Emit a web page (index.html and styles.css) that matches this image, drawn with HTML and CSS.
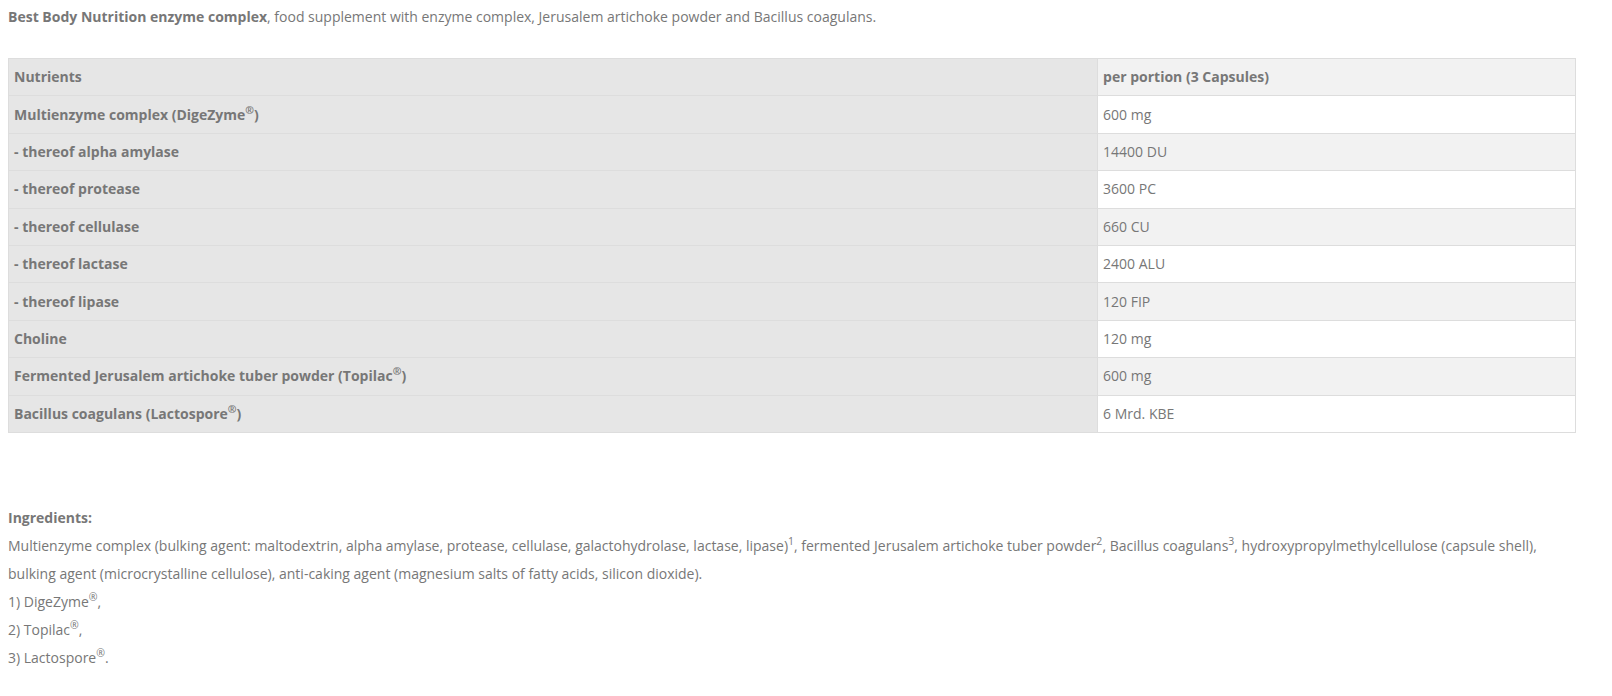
FILE: index.html
```html
<!DOCTYPE html>
<html lang="en">
<head>
    <meta charset="UTF-8">
    <meta name="viewport" content="width=device-width, initial-scale=1.0">
    <link rel="stylesheet" href="styles.css">
    <title>Best Body Nutrition enzyme complex</title>
</head>
<body>
    <div class="content">
        <p class="intro"><strong>Best Body Nutrition enzyme complex</strong>, food supplement with enzyme complex, Jerusalem artichoke powder and Bacillus coagulans.</p>

        <table class="nutrients">
            <tr class="head">
                <td class="name">Nutrients</td>
                <td class="value">per portion (3 Capsules)</td>
            </tr>
            <tr>
                <td class="name">Multienzyme complex (DigeZyme<sup>®</sup>)</td>
                <td class="value">600 mg</td>
            </tr>
            <tr>
                <td class="name">- thereof alpha amylase</td>
                <td class="value">14400 DU</td>
            </tr>
            <tr>
                <td class="name">- thereof protease</td>
                <td class="value">3600 PC</td>
            </tr>
            <tr>
                <td class="name">- thereof cellulase</td>
                <td class="value">660 CU</td>
            </tr>
            <tr>
                <td class="name">- thereof lactase</td>
                <td class="value">2400 ALU</td>
            </tr>
            <tr>
                <td class="name">- thereof lipase</td>
                <td class="value">120 FIP</td>
            </tr>
            <tr>
                <td class="name">Choline</td>
                <td class="value">120 mg</td>
            </tr>
            <tr>
                <td class="name">Fermented Jerusalem artichoke tuber powder (Topilac<sup>®</sup>)</td>
                <td class="value">600 mg</td>
            </tr>
            <tr>
                <td class="name">Bacillus coagulans (Lactospore<sup>®</sup>)</td>
                <td class="value">6 Mrd. KBE</td>
            </tr>
        </table>

        <div class="ingredients">
            <strong>Ingredients:</strong><br>
            Multienzyme complex (bulking agent: maltodextrin, alpha amylase, protease, cellulase, galactohydrolase, lactase, lipase)<sup>1</sup>, fermented Jerusalem artichoke tuber powder<sup>2</sup>, Bacillus coagulans<sup>3</sup>, hydroxypropylmethylcellulose (capsule shell), bulking agent (microcrystalline cellulose), anti-caking agent (magnesium salts of fatty acids, silicon dioxide).<br>
            1) DigeZyme<sup>®</sup>,<br>
            2) Topilac<sup>®</sup>,<br>
            3) Lactospore<sup>®</sup>.
        </div>
    </div>
</body>
</html>
```

FILE: styles.css
```css
*{
    box-sizing: border-box;
}

body{
    margin: 8px;
    font-family: "Open Sans", sans-serif;
    font-size: 14px;
    color: #777;
    background-color: #fff;
}

.content{
    width: calc(100% - 28px);
}

strong{
    font-weight: 700;
}

sup{
    font-size: 0.75em;
    line-height: 0;
}

.intro{
    margin: 0;
    line-height: 18px;
}

.nutrients{
    width: 100%;
    margin-top: 32px;
    border-collapse: collapse;
    border: 1px solid #ddd;
}

.nutrients td{
    border-top: 1px solid #ddd;
    padding: 0 5px;
    height: 37.4px;
    line-height: 20px;
    vertical-align: middle;
}

.nutrients .name{
    width: 69.5%;
    font-weight: 700;
    background-color: #e6e6e6;
}

.nutrients .value{
    border-left: 1px solid #ddd;
    background-color: #fff;
}

.nutrients tr:nth-child(odd) .value{
    background-color: #f2f2f2;
}

.nutrients .head .value{
    font-weight: 700;
    background-color: #e6e6e6;
}

.ingredients{
    margin-top: 71px;
    line-height: 28px;
}
```
